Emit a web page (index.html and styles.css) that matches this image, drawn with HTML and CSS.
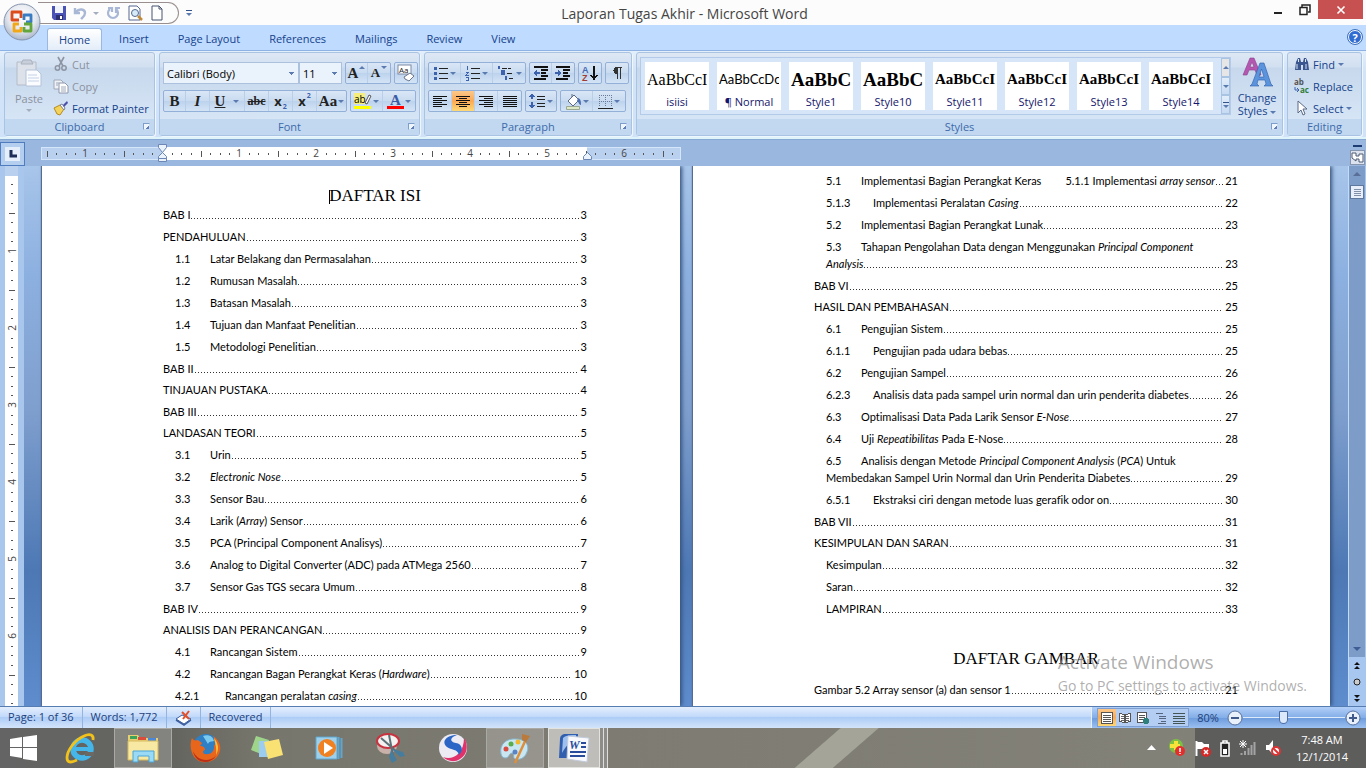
FILE: index.html
```html
<!DOCTYPE html>
<html lang="en">
<head>
    <meta charset="UTF-8">
    <meta name="viewport" content="width=device-width, initial-scale=1.0">
    <title>Laporan Tugas Akhir - Microsoft Word</title>
    <link rel="stylesheet" href="styles.css">
</head>
<body>
    <header class="titlebar">
        <div class="quick">
            <button class="qbtn" aria-label="Save"><svg width="16" height="16" viewBox="0 0 16 16"><path d="M1 1h14v14H3l-2-2z" fill="#4a52b5"/><path d="M4 1h8v7H4z" fill="#eef2fb"/><path d="M5 10h7v5H5z" fill="#2b2f6d"/><path d="M9 11h2v3H9z" fill="#fff"/></svg></button>
            <button class="qbtn wide" aria-label="Undo"><svg width="14" height="14" viewBox="0 0 14 14"><path d="M2 2v5h5M3 6c3-4 9-3 9 1 0 3-2 4-4 6" fill="none" stroke="#a9b7d6" stroke-width="2.4"/></svg><i class="caret dim"></i></button>
            <button class="qbtn" aria-label="Repeat"><svg width="14" height="14" viewBox="0 0 14 14"><path d="M4 3a5 5 0 1 0 6 0M10 7V2h4M2 2h4v4" fill="none" stroke="#a9b7d6" stroke-width="2.2"/></svg></button>
            <button class="qbtn" aria-label="Print Preview"><svg width="16" height="16" viewBox="0 0 16 16"><path d="M2 1h8l3 3v11H2z" fill="#fff" stroke="#54678f"/><circle cx="8" cy="8" r="3.5" fill="#d6ebf7" stroke="#54678f"/><path d="M11 11l4 4" stroke="#c08a3a" stroke-width="2.5"/></svg></button>
            <button class="qbtn" aria-label="New"><svg width="16" height="16" viewBox="0 0 16 16"><path d="M3 1h7l3 3v11H3z" fill="#fff" stroke="#47536e"/><path d="M10 1v3h3" fill="none" stroke="#47536e"/></svg></button>
        </div>
        <button class="quick-more" aria-label="Customize"><i class="caret barred"></i></button>
        <h1>Laporan Tugas Akhir - Microsoft Word</h1>
        <div class="winctl">
            <button aria-label="Minimize"><svg width="12" height="12"><path d="M2 9h8" stroke="#222" stroke-width="2"/></svg></button>
            <button aria-label="Restore"><svg width="12" height="12"><path d="M1 3.500h7v7H1zM3 3V1h8v7H9" fill="none" stroke="#222" stroke-width="1.500"/></svg></button>
            <button class="close" aria-label="Close"><svg width="10" height="10"><path d="M1.500 1.500l7 7M8.500 1.500l-7 7" stroke="#fff" stroke-width="1.600"/></svg></button>
        </div>
    </header>

    <nav class="tabs">
        <a href="#" class="active">Home</a>
        <a href="#">Insert</a>
        <a href="#">Page Layout</a>
        <a href="#">References</a>
        <a href="#">Mailings</a>
        <a href="#">Review</a>
        <a href="#">View</a>
        <button class="help" aria-label="Help">?</button>
        <button class="office" aria-label="Office Button">
            <svg width="38" height="38" viewBox="0 0 38 38">
                <defs><radialGradient id="orb" cx=".5" cy=".35" r=".65"><stop offset="0" stop-color="#fff"/><stop offset=".6" stop-color="#e3e7ee"/><stop offset="1" stop-color="#a9b5c9"/></radialGradient></defs>
                <circle cx="19" cy="19" r="18" fill="url(#orb)" stroke="#8594ad"/>
                <g fill="none" stroke-width="2.800" stroke-linejoin="round">
                    <path d="M16 17h-7V9h9v6" stroke="#dd4b1c"/>
                    <path d="M21 17v-5h7v7h-5" stroke="#3a7cc4"/>
                    <path d="M16 21h-5v7h7v-4" stroke="#f0a818"/>
                    <path d="M21 21h7v7h-7v-4" stroke="#62a53b"/>
                </g>
            </svg>
        </button>
    </nav>

    <section class="ribbon">
        <div class="group clipboard">
            <div class="group-body">
                <button class="big dim-text"><svg width="28" height="30" viewBox="0 0 28 30"><path d="M2 4h19v23H2z" fill="#dde2ea" stroke="#b4bbc8"/><path d="M6 6l2-4h8l2 4z" fill="#c9cfda" stroke="#aab1bf"/><path d="M11 12h11l4 4v12H11z" fill="#fafcff" stroke="#b4c2d8"/><path d="M13 17h9M13 20h11M13 23h11" stroke="#c5d2e6"/></svg><span>Paste</span><i class="caret dim"></i></button>
                <div class="stack">
                    <button class="dim-text"><svg width="16" height="16" viewBox="0 0 16 16"><path d="M5 1l5 9M11 1L6 10" stroke="#8d95a3" stroke-width="1.600"/><circle cx="4.500" cy="12" r="2.200" fill="none" stroke="#8d95a3" stroke-width="1.500"/><circle cx="11" cy="12" r="2.200" fill="none" stroke="#8d95a3" stroke-width="1.500"/></svg>Cut</button>
                    <button class="dim-text"><svg width="16" height="16" viewBox="0 0 16 16"><path d="M1 2h7l2 2v7H1z" fill="#eef1f6" stroke="#a0a8b8"/><path d="M6 5h6l3 3v7H6z" fill="#fff" stroke="#8d97ab"/><path d="M8 9h5M8 11h5M8 13h5M3 5h3M3 7h2" stroke="#a0a8b8"/></svg>Copy</button>
                    <button><svg width="16" height="16" viewBox="0 0 16 16"><path d="M1 8l6-3 4 4-4 6-3-1z" fill="#f3d35b" stroke="#b78a1c"/><path d="M7 5l2-1 3 4-1 2z" fill="#fff" stroke="#77809a"/><path d="M10 5l4-4 1 2-4 4z" fill="#4b4fa8"/></svg>Format Painter</button>
                </div>
            </div>
            <footer>Clipboard<i class="launcher"></i></footer>
        </div>

        <div class="group font">
            <div class="group-body rows">
                <div class="row">
                    <div class="combos">
                        <select class="face" aria-label="Font"><option>Calibri (Body)</option></select>
                        <select class="size" aria-label="Font Size"><option>11</option></select>
                    </div>
                    <div class="btns">
                        <button class="serif w22">A<i class="caret up"></i></button>
                        <button class="serif small w22">A<i class="caret"></i></button>
                    </div>
                    <div class="btns">
                        <button class="w22" aria-label="Clear Formatting"><svg width="18" height="18" viewBox="0 0 18 18"><rect x="1" y="1" width="13" height="9" fill="#fff" stroke="#7d8aa5"/><text x="2" y="9" font-size="8" font-family="Open Sans" fill="#222">Aa</text><path d="M7 13l6-4 4 3-5 5-4-2z" fill="#fff" stroke="#6d7589"/></svg></button>
                    </div>
                </div>
                <div class="row">
                    <div class="btns">
                        <button class="serif w22">B</button>
                        <button class="serif w24 it">I</button>
                        <button class="serif w36"><u>U</u><i class="caret"></i></button>
                        <button class="serif w24 strike">abc</button>
                        <button class="sub w24">x<sub>2</sub></button>
                        <button class="sub w24">x<sup>2</sup></button>
                        <button class="serif w28">Aa<i class="caret"></i></button>
                    </div>
                    <div class="btns">
                        <button class="w32" aria-label="Highlight"><svg width="18" height="18" viewBox="0 0 18 18"><path d="M0 1h11v11H0z" fill="#f5ee7c"/><text x="0" y="11" font-size="10" font-family="Open Sans">ab</text><path d="M11 11l4-8 2 1-4 8z" fill="#fff" stroke="#555"/><path d="M0 14h17v3H0z" fill="#ff0"/></svg><i class="caret"></i></button>
                        <button class="w32" aria-label="Font Color"><svg width="17" height="18" viewBox="0 0 17 18"><text x="3" y="13" font-size="15" font-weight="700" font-family="Liberation Serif" fill="#3a5ba5">A</text><path d="M0 14h17v3H0z" fill="#f00"/></svg><i class="caret"></i></button>
                    </div>
                </div>
            </div>
            <footer>Font<i class="launcher"></i></footer>
        </div>

        <div class="group paragraph">
            <div class="group-body rows">
                <div class="row">
                    <div class="btns">
                        <button class="w32" aria-label="Bullets"><svg width="16" height="16" viewBox="0 0 16 16"><path d="M1 3h3M1 8h3M1 13h3" stroke="#3c62ad" stroke-width="3"/><path d="M6 3h9M6 8h9M6 13h9" stroke="#222"/></svg><i class="caret"></i></button>
                        <button class="w32" aria-label="Numbering"><svg width="16" height="16" viewBox="0 0 16 16"><path d="M2 1v4M1 7h2v1l-2 2h3M1 12h2v3H1" fill="none" stroke="#3c62ad"/><path d="M6 3h9M6 8h9M6 13h9" stroke="#222"/></svg><i class="caret"></i></button>
                        <button class="w32" aria-label="Multilevel List"><svg width="18" height="16" viewBox="0 0 18 16"><path d="M2 1v3M5 6h2v3H5zM9 11v4" fill="none" stroke="#3c62ad" stroke-width="1.500"/><path d="M5 3h9M10 8h6M12 13h4" stroke="#222" stroke-dasharray="5 1"/></svg><i class="caret"></i></button>
                    </div>
                    <div class="btns">
                        <button class="w22" aria-label="Decrease Indent"><svg width="16" height="16" viewBox="0 0 16 16"><path d="M1 2h14M8 5h7M8 8h5M8 11h7M1 14h12" stroke="#111" stroke-width="1.600"/><path d="M0 8l4-3v2h3v2H4v2z" fill="#3c62ad"/></svg></button>
                        <button class="w22" aria-label="Increase Indent"><svg width="16" height="16" viewBox="0 0 16 16"><path d="M1 2h14M8 5h7M8 8h5M8 11h7M1 14h12" stroke="#111" stroke-width="1.600"/><path d="M7 8L3 5v2H0v2h3v2z" fill="#3c62ad"/></svg></button>
                    </div>
                    <div class="btns">
                        <button class="w22" aria-label="Sort"><svg width="16" height="18" viewBox="0 0 16 18"><text x="0" y="9" font-size="9" font-weight="700" font-family="Liberation Sans" fill="#4467b0">A</text><text x="0" y="17" font-size="9" font-weight="700" font-family="Liberation Sans" fill="#a33d33">Z</text><path d="M12 2v12M9 11l3 4 3-4" fill="none" stroke="#111" stroke-width="1.500"/></svg></button>
                    </div>
                    <div class="btns">
                        <button class="w22" aria-label="Show marks"><svg width="12" height="14" viewBox="0 0 12 14"><path d="M6 1a3.500 3.500 0 0 0 0 7z" fill="#333"/><path d="M4 1.500h7M6.500 1v12M9.500 1v12" stroke="#333" stroke-width="1.300"/></svg></button>
                    </div>
                </div>
                <div class="row">
                    <div class="btns">
                        <button class="w23" aria-label="Align Left"><svg width="14" height="12"><path d="M0 1h14M0 5h14M0 9h14" stroke="#111"/><path d="M0 3h9M0 7h9M0 11h9" stroke="#111"/></svg></button>
                        <button class="w23 on" aria-label="Center"><svg width="14" height="12"><path d="M0 1h14M0 5h14M0 9h14" stroke="#111"/><path d="M3 3h8M3 7h8M3 11h8" stroke="#111"/></svg></button>
                        <button class="w23" aria-label="Align Right"><svg width="14" height="12"><path d="M0 1h14M0 5h14M0 9h14" stroke="#111"/><path d="M5 3h9M5 7h9M5 11h9" stroke="#111"/></svg></button>
                        <button class="w23" aria-label="Justify"><svg width="14" height="12"><path d="M0 1h14M0 3h14M0 5h14M0 7h14M0 9h14M0 11h14" stroke="#111"/></svg></button>
                    </div>
                    <div class="btns">
                        <button class="w30" aria-label="Line Spacing"><svg width="17" height="16" viewBox="0 0 17 16"><path d="M3 1v14" stroke="#3c62ad" stroke-dasharray="5 3" stroke-width="1.500"/><path d="M0 4l3-4 3 4zM0 12l3 4 3-4z" fill="#3c62ad"/><path d="M8 3h8M8 6h8M8 10h8M8 13h8" stroke="#222"/></svg><i class="caret"></i></button>
                    </div>
                    <div class="btns">
                        <button class="w32" aria-label="Shading"><svg class="smooth" width="17" height="17" viewBox="0 0 17 17"><path d="M3 8l6-6 5 5-6 6z" fill="#fff" stroke="#5c6a86"/><path d="M7 4V1" stroke="#5c6a86"/><path d="M13 5c3 1 3 4 3 7-2 0-2-3-4-4z" fill="#4a6cb0"/><path d="M1.500 13.500h13v3h-13z" fill="#dce8c6" stroke="#9ba893"/></svg><i class="caret"></i></button>
                        <button class="w32" aria-label="Borders"><svg width="15" height="15"><path d="M1 1h13M1 7h13M1 1v12M7 1v12M13 1v12" stroke="#6b7a99" stroke-dasharray="1 1"/><path d="M0 14h15" stroke="#222"/></svg><i class="caret"></i></button>
                    </div>
                </div>
            </div>
            <footer>Paragraph<i class="launcher"></i></footer>
        </div>

        <div class="group styles">
            <div class="group-body">
                <div class="gallery">
                    <button><b class="s-isi">AaBbCcI</b>isiisi</button>
                    <button><b class="s-normal">AaBbCcDc</b>¶ Normal</button>
                    <button><b class="s-large">AaBbC</b>Style1</button>
                    <button><b class="s-large">AaBbC</b>Style10</button>
                    <button><b>AaBbCcI</b>Style11</button>
                    <button><b>AaBbCcI</b>Style12</button>
                    <button><b>AaBbCcI</b>Style13</button>
                    <button><b>AaBbCcI</b>Style14</button>
                    <div class="gallery-nav">
                        <button class="off" aria-label="Up"><i class="caret up"></i></button>
                        <button aria-label="Down"><i class="caret"></i></button>
                        <button aria-label="More"><i class="caret barred"></i></button>
                    </div>
                </div>
                <button class="big change"><svg width="30" height="30" viewBox="0 0 30 30"><path d="M1 18L8 1h4l7 17h-4l-2-5H7l-2 5zM8 10h4l-2-5z" fill="#b557b0" stroke="#87408a" stroke-width=".6"/><path d="M8 29l2-2 8-21h4l7 21 2 2h-9l2-2-1-4h-7l-1 4 2 2zM17 20h5l-2.500-8z" fill="#5b94dc" stroke="#2d5ca8" stroke-width=".6"/></svg><span>Change<br>Styles <i class="caret"></i></span></button>
            </div>
            <footer>Styles<i class="launcher"></i></footer>
        </div>

        <div class="group editing">
            <div class="group-body">
                <div class="stack">
                    <button><svg width="16" height="14" viewBox="0 0 16 14"><path d="M2 5l2-4h2l1 4h2l1-4h2l2 4 1 8H9V8H7v5H1z" fill="#3b558f"/><path d="M3 7v5M12 7v5M4.500 2v3M11.500 2v3" stroke="#dbe6f8"/></svg>Find <i class="caret"></i></button>
                    <button><svg width="16" height="18" viewBox="0 0 16 18"><text x="0" y="8" font-size="8" font-weight="700" font-family="Open Sans" fill="#555">ab</text><text x="6" y="16" font-size="8" font-weight="700" font-family="Open Sans" fill="#2e7d3a">ac</text><path d="M1 10v3h4M3 11l2 2-2 2" fill="none" stroke="#3c62ad"/></svg>Replace</button>
                    <button><svg width="16" height="16" viewBox="0 0 16 16"><path d="M4 1v12l3-3 2 5 2-1-2-5h4z" fill="#fff" stroke="#5b6987"/></svg>Select <i class="caret"></i></button>
                </div>
            </div>
            <footer>Editing</footer>
        </div>
    </section>

    <div class="ruler-row">
        <button class="tabstop" aria-label="Tab selector"><svg width="8" height="8"><path d="M2 0v6h6" fill="none" stroke="#1d2f58" stroke-width="3"/></svg></button>
        <div class="hruler">
            <svg width="640" height="22">
                <defs><pattern id="inch" x="121" y="7" width="77" height="13" patternUnits="userSpaceOnUse">
                    <path d="M10 6v2M19 6v2M29 6v2M48 6v2M58 6v2M67 6v2M39 4v6" stroke="#555"/>
                </pattern></defs>
                <rect x="0.500" y="7.500" width="639" height="12" fill="#b9d0ee" stroke="#d6e6fa"/>
                <rect x="121" y="7" width="425" height="13" fill="#fff"/>
                <rect x="4" y="7" width="630" height="13" fill="url(#inch)"/>
                <g font-size="10" font-family="Open Sans" fill="#444" text-anchor="middle">
                    <text x="44" y="17">1</text><text x="198" y="17">1</text><text x="275" y="17">2</text><text x="352" y="17">3</text><text x="429" y="17">4</text><text x="506" y="17">5</text><text x="583" y="17">6</text>
                </g>
                <g fill="#eaf2fc" stroke="#6c87b5"><path d="M117.500 4.500h8v3l-4 5-4-5zM121.500 12.500l4 4v2h-8v-2zM117.500 18.500h8v3h-8z"/><path d="M546.500 12.500l4 4v3h-8v-3z"/></g>
            </svg>
        </div>
        <button class="view-ruler" aria-label="View Ruler"><svg width="15" height="20" viewBox="0 0 15 20"><path d="M3 1h9" stroke="#1e3c72" stroke-width="2"/><rect x=".5" y="5.500" width="14" height="14" fill="#dde3ee" stroke="#8694ad"/><path d="M2 8h4v3h3V9h4v8H9v-3H6v2L2 13z" fill="#fff" stroke="#4d5a75"/></svg></button>
    </div>

    <main class="workspace">
        <div class="vruler">
            <svg width="24" height="540">
                <defs><pattern id="vinch" x="5" y="8" width="13" height="77" patternUnits="userSpaceOnUse">
                    <path d="M6 10h2M6 19h2M6 29h2M6 48h2M6 58h2M6 67h2M4 39h6" stroke="#555"/>
                </pattern></defs>
                <rect x="5" y="0" width="13" height="10" fill="#b9d0ee"/>
                <rect x="5" y="10" width="13" height="530" fill="#fff"/>
                <rect x="5" y="12" width="13" height="528" fill="url(#vinch)"/>
                <g font-size="10" font-family="Open Sans" fill="#444" text-anchor="middle">
                    <text transform="translate(16 85) rotate(-90)">1</text><text transform="translate(16 162) rotate(-90)">2</text><text transform="translate(16 239) rotate(-90)">3</text><text transform="translate(16 316) rotate(-90)">4</text><text transform="translate(16 393) rotate(-90)">5</text><text transform="translate(16 470) rotate(-90)">6</text>
                </g>
            </svg>
        </div>

        <div class="canvas">
            <article class="page left">
                <h2>DAFTAR ISI</h2>
                <ol class="toc">
                    <li class="bab"><span>BAB I</span><i></i><b>3</b></li>
                    <li><span>PENDAHULUAN</span><i></i><b>3</b></li>
                    <li class="sub1"><em>1.1</em><span>Latar Belakang dan Permasalahan</span><i></i><b>3</b></li>
                    <li class="sub1"><em>1.2</em><span>Rumusan Masalah</span><i></i><b>3</b></li>
                    <li class="sub1"><em>1.3</em><span>Batasan Masalah</span><i></i><b>3</b></li>
                    <li class="sub1"><em>1.4</em><span>Tujuan dan Manfaat Penelitian</span><i></i><b>3</b></li>
                    <li class="sub1"><em>1.5</em><span>Metodologi Penelitian</span><i></i><b>3</b></li>
                    <li class="bab"><span>BAB II</span><i></i><b>4</b></li>
                    <li><span>TINJAUAN PUSTAKA</span><i></i><b>4</b></li>
                    <li class="bab"><span>BAB III</span><i></i><b>5</b></li>
                    <li><span>LANDASAN TEORI</span><i></i><b>5</b></li>
                    <li class="sub1"><em>3.1</em><span>Urin</span><i></i><b>5</b></li>
                    <li class="sub1"><em>3.2</em><span><q>Electronic Nose</q></span><i></i><b>5</b></li>
                    <li class="sub1"><em>3.3</em><span>Sensor Bau</span><i></i><b>6</b></li>
                    <li class="sub1"><em>3.4</em><span>Larik (<q>Array</q>) Sensor</span><i></i><b>6</b></li>
                    <li class="sub1"><em>3.5</em><span>PCA (Principal Component Analisys)</span><i></i><b>7</b></li>
                    <li class="sub1"><em>3.6</em><span>Analog to Digital Converter (ADC) pada ATMega 2560</span><i></i><b>7</b></li>
                    <li class="sub1"><em>3.7</em><span>Sensor Gas TGS secara Umum</span><i></i><b>8</b></li>
                    <li class="bab"><span>BAB IV</span><i></i><b>9</b></li>
                    <li><span>ANALISIS DAN PERANCANGAN</span><i></i><b>9</b></li>
                    <li class="sub1"><em>4.1</em><span>Rancangan Sistem</span><i></i><b>9</b></li>
                    <li class="sub1"><em>4.2</em><span>Rancangan Bagan Perangkat Keras (<q>Hardware</q>)</span><i></i><b>10</b></li>
                    <li class="sub2 wide"><em>4.2.1</em><span>Rancangan peralatan <q>casing</q></span><i></i><b>10</b></li>
                </ol>
            </article>

            <article class="page right">
                <ol class="toc">
                    <li class="sub1"><em>5.1</em><span>Implementasi Bagian Perangkat Keras</span><span class="tabbed">5.1.1 Implementasi <q>array sensor</q></span><i></i><b>21</b></li>
                    <li class="sub2"><em>5.1.3</em><span>Implementasi Peralatan <q>Casing</q></span><i></i><b>22</b></li>
                    <li class="sub1"><em>5.2</em><span>Implementasi Bagian Perangkat Lunak</span><i></i><b>23</b></li>
                    <li class="sub1 wrap"><em>5.3</em><span>Tahapan Pengolahan Data dengan Menggunakan <q>Principal Component</q></span></li>
                    <li class="sub1"><span><q>Analysis</q></span><i></i><b>23</b></li>
                    <li class="bab"><span>BAB VI</span><i></i><b>25</b></li>
                    <li><span>HASIL DAN PEMBAHASAN</span><i></i><b>25</b></li>
                    <li class="sub1"><em>6.1</em><span>Pengujian Sistem</span><i></i><b>25</b></li>
                    <li class="sub2"><em>6.1.1</em><span>Pengujian pada udara bebas</span><i></i><b>25</b></li>
                    <li class="sub1"><em>6.2</em><span>Pengujian Sampel</span><i></i><b>26</b></li>
                    <li class="sub2"><em>6.2.3</em><span>Analisis data pada sampel urin normal dan urin penderita diabetes</span><i></i><b>26</b></li>
                    <li class="sub1"><em>6.3</em><span>Optimalisasi Data Pada Larik Sensor <q>E-Nose</q></span><i></i><b>27</b></li>
                    <li class="sub1"><em>6.4</em><span>Uji <q>Repeatibilitas</q> Pada E-Nose</span><i></i><b>28</b></li>
                    <li class="sub1 wrap"><em>6.5</em><span>Analisis dengan Metode <q>Principal Component Analysis</q> (<q>PCA</q>) Untuk</span></li>
                    <li class="sub1"><span>Membedakan Sampel Urin Normal dan Urin Penderita Diabetes</span><i></i><b>29</b></li>
                    <li class="sub2"><em>6.5.1</em><span>Ekstraksi ciri dengan metode luas gerafik odor on</span><i></i><b>30</b></li>
                    <li class="bab"><span>BAB VII</span><i></i><b>31</b></li>
                    <li><span>KESIMPULAN DAN SARAN</span><i></i><b>31</b></li>
                    <li class="sub1"><span>Kesimpulan</span><i></i><b>32</b></li>
                    <li class="sub1"><span>Saran</span><i></i><b>32</b></li>
                    <li class="sub1"><span>LAMPIRAN</span><i></i><b>33</b></li>
                </ol>
                <h2>DAFTAR GAMBAR</h2>
                <ol class="toc">
                    <li><span>Gambar 5.2 Array sensor (a) dan sensor 1</span><i></i><b>21</b></li>
                </ol>
            </article>

            <div class="watermark"><strong>Activate Windows</strong>Go to PC settings to activate Windows.</div>
        </div>

        <div class="scrollbar">
            <div class="track">
                <button aria-label="Scroll up"><i class="caret up"></i></button>
                <button class="thumb" aria-label="Scroll thumb"></button>
                <button class="down" aria-label="Scroll down"><i class="caret"></i></button>
            </div>
            <button aria-label="Previous page"><svg width="6" height="8"><path d="M0 3l3-3 3 3zM0 7l3-3 3 3z" fill="#111"/></svg></button>
            <button aria-label="Browse object"><svg width="8" height="8"><circle cx="4" cy="4" r="3" fill="#ccc" stroke="#222"/></svg></button>
            <button aria-label="Next page"><svg width="6" height="8"><path d="M0 1l3 3 3-3zM0 5l3 3 3-3z" fill="#111"/></svg></button>
        </div>
    </main>

    <div class="statusbar">
        <span>Page: 1 of 36</span>
        <span>Words: 1,772</span>
        <span class="proof"><svg width="17" height="16" viewBox="0 0 17 16"><path d="M1 9l6-4 9 4-7 5z" fill="#fff" stroke="#3d5f9f"/><path d="M1 10l8 5 7-5" fill="none" stroke="#3d5f9f" stroke-width="1.500"/><path d="M7 2l7 7M14 1L8 9" stroke="#e2502b" stroke-width="2"/></svg></span>
        <span>Recovered</span>
        <div class="status-right">
            <div class="views">
                <button class="on" aria-label="Print Layout"><svg width="12" height="12"><path d="M.5.500h11v11H.5z" fill="#fff" stroke="#555"/><path d="M2 3h8M2 5h8M2 7h8M2 9h8" stroke="#555"/></svg></button>
                <button aria-label="Full Screen Reading"><svg width="12" height="12"><path d="M.5 1.500l5 1v8l-5-1zM11.500 1.500l-5 1v8l5-1z" fill="#fff" stroke="#555"/><path d="M2 4h3M2 6h3M2 8h3M7 4h3M7 6h3M7 8h3" stroke="#666"/></svg></button>
                <button aria-label="Web Layout"><svg width="12" height="12"><path d="M.5.500h9v10h-9z" fill="#fff" stroke="#555"/><path d="M2 3h6M2 5h6M2 7h6" stroke="#555"/><circle cx="9" cy="9" r="3" fill="#2f7f7a"/></svg></button>
                <button aria-label="Outline"><svg width="12" height="12"><path d="M1 1h7M4 4h7M4 6h7M6 9h5M3 11h8" stroke="#56657f"/></svg></button>
                <button aria-label="Draft"><svg width="12" height="12"><path d="M0 1h12M0 4h12M0 6h12M0 9h12M0 11h12" stroke="#455"/></svg></button>
            </div>
            <span class="pct">80%</span>
            <button class="zoom" aria-label="Zoom out"><svg width="16" height="16"><circle cx="8" cy="8" r="7" fill="#e8f0fb" stroke="#56709f"/><path d="M4 8h8" stroke="#3f5a8b" stroke-width="2"/></svg></button>
            <input type="range" min="0" max="100" value="39" aria-label="Zoom">
            <button class="zoom" aria-label="Zoom in"><svg width="16" height="16"><circle cx="8" cy="8" r="7" fill="#e8f0fb" stroke="#56709f"/><path d="M4 8h8M8 4v8" stroke="#3f5a8b" stroke-width="2"/></svg></button>
        </div>
    </div>

    <footer class="taskbar">
        <button class="start" aria-label="Start"><svg width="28" height="26" viewBox="0 0 28 26"><path d="M0 4l12-2v10H0zM13 2l14-2v12H13zM0 13h12v10L0 21zM13 13h14v13l-14-2z" fill="#fff"/></svg></button>
        <button aria-label="Internet Explorer"><svg width="32" height="32" viewBox="0 0 32 32"><circle cx="17" cy="17" r="9" fill="none" stroke="#45b6ea" stroke-width="5.500"/><path d="M10 17h15" stroke="#45b6ea" stroke-width="4"/><path d="M20 20h9v4h-9z" fill="#6b6965"/><path d="M28 8c1-5-3-7-9-4C10 8 2 18 2 26c0 6 6 4 10 2" fill="none" stroke="#f2c21c" stroke-width="2.800"/></svg></button>
        <button class="open" aria-label="File Explorer"><svg width="34" height="32" viewBox="0 0 34 32"><path d="M2 3h10l2 3h18v22H2z" fill="#e9cf72"/><path d="M4 4h7v3H4z" fill="#3ca35a"/><path d="M12 5h8v3h-8z" fill="#d94d3a"/><path d="M22 6h8v3h-8z" fill="#4a87d8"/><path d="M2 9h30v19H2z" fill="#f7e8a4" stroke="#d6b95d"/><path d="M7 30V19h21v11h-5v-6H12v6z" fill="#9bdaf5" stroke="#4aa5d6"/></svg></button>
        <button aria-label="Firefox"><svg width="32" height="32" viewBox="0 0 32 32"><circle cx="17" cy="15" r="13" fill="#2e7fc4"/><path d="M14 4c5-2 10 0 11 5-3 1-5 0-6 3" fill="#7cc9f0"/><path d="M3 6c1 2 3 3 6 2l4 3-2 3c3 0 5 1 5 4-2 0-3 3 0 4 5 1 10-2 9-9 2 2 1-6-1-9 8 5 10 15 3 22-8 7-19 5-23-3C1 17 1 11 3 6z" fill="#e8661c"/><path d="M4 19c3 8 14 13 23 5-7 10-21 7-23-5z" fill="#b92f17"/><path d="M25 6c5 6 5 12 2 17 1-7-1-12-2-17z" fill="#f8be3a"/></svg></button>
        <button aria-label="Sticky Notes"><svg width="34" height="28" viewBox="0 0 34 28"><path d="M6 2l13 4-5 15L1 16z" fill="#9fd58b"/><path d="M9 7h15v16H9z" fill="#9ccdf0"/><path d="M14 8l15-3 4 16-15 4z" fill="#f9e174"/></svg></button>
        <button aria-label="Media Player"><svg width="28" height="26" viewBox="0 0 28 26"><path d="M1 2h21v22H1z" fill="#9ed0ec" stroke="#5fa7d0"/><path d="M23.500 2v22M26.500 3v20" stroke="#5fa7d0" stroke-width="2"/><circle cx="12" cy="13" r="9" fill="#f08020"/><path d="M9 7l9 6-9 6z" fill="#fff"/></svg></button>
        <button aria-label="Snipping Tool"><svg width="32" height="32" viewBox="0 0 32 32"><ellipse cx="12" cy="14" rx="10" ry="8" fill="#c9b0a8"/><ellipse cx="13" cy="9" rx="11" ry="7" fill="#f4f1f1" stroke="#c8333f" stroke-width="2"/><path d="M6 6l16 14M14 3l4 20" stroke="#5c7075" stroke-width="2"/><path d="M17 17l11 3 2 4-5 1zM16 18l6 10-5 3-3-6z" fill="#467c9d"/></svg></button>
        <button aria-label="Baidu Browser"><svg width="32" height="32" viewBox="0 0 32 32"><circle cx="16" cy="16" r="14" fill="#eceaf2"/><path d="M27 6c5 8 3 17-4 21-6 4-13 2-17-2 9 4 21-3 21-19z" fill="#e0336c"/><path d="M20 3C9 3 4 10 10 15c4 3 11 2 12 8 5-5 3-11-3-12-7-1-6-6 1-8z" fill="#2b66c6"/></svg></button>
        <button class="open" aria-label="Paint"><svg width="32" height="32" viewBox="0 0 32 32"><path d="M2 22C0 12 8 6 17 7c9 0 14 6 11 13-3 9-12 8-13 6s1-5-2-5-3 5-6 5-4-1-5-4z" fill="#c9e6f3" stroke="#86b6ce"/><circle cx="7" cy="17" r="2.500" fill="#d84b3f"/><circle cx="12" cy="12" r="2.500" fill="#59ad4a"/><circle cx="19" cy="10" r="2.500" fill="#f2b830"/><circle cx="16" cy="20" r="2.500" fill="#5b84c4"/><path d="M28 5L16 31" stroke="#dd8f3a" stroke-width="2.500"/><path d="M23 2l8 2-4 6-4-2z" fill="#b97a3c"/></svg></button>
        <button class="open word" aria-label="Microsoft Word"><svg width="32" height="30" viewBox="0 0 32 30"><path d="M2 6c0-3 2-5 6-5h12v24H1z" fill="#315fae"/><path d="M5 5c3-3 8-3 13-3v6c-6 0-10 5-14 12z" fill="#9dc0ef"/><path d="M10 3l21 2-2 24-20-3z" fill="#f7f9fd" stroke="#c2cbdc"/><text x="11" y="16" font-size="12" font-style="italic" font-weight="700" font-family="Liberation Serif" fill="#284c9b">W</text><path d="M23 10h5M23 14h5M12 19h16M12 23h15" stroke="#284c9b" stroke-width="2"/></svg></button>
        <div class="tray">
            <svg width="9" height="6"><path d="M0 5l4.500-5L9 5z" fill="#fff"/></svg>
            <svg class="shield" width="18" height="18" viewBox="0 0 18 18"><circle cx="8" cy="7" r="7" fill="#7cc142"/><path d="M2 7h10M8 2v9" stroke="#f6e43b" stroke-width="4"/><circle cx="12" cy="12" r="5" fill="#e32f2b"/><path d="M12 9v4M12 14v1" stroke="#fff" stroke-width="1.500"/></svg>
            <svg width="16" height="17" viewBox="0 0 16 17"><path d="M1.500 1v15" stroke="#fff" stroke-width="2"/><path d="M2 2h5l2 2h5v7H9L7 9H2z" fill="#fff"/><circle cx="11" cy="12" r="5" fill="#d72828"/><path d="M9 10l4 4M13 10l-4 4" stroke="#fff" stroke-width="1.500"/></svg>
            <svg width="10" height="17" viewBox="0 0 10 17"><path d="M1 3h8v13H1zM3 1h4v2H3z" fill="#222" stroke="#fff" stroke-width="1.500"/><path d="M3 9h4v5H3z" fill="#fff"/></svg>
            <svg width="17" height="16" viewBox="0 0 17 16"><path d="M2.500 13v2M6 11v4M9.500 8v7M12.500 5v10M15.500 2v13" stroke="#a3a3a3" stroke-width="2"/><path d="M4 0v8M0 4h8M1 1l6 6M7 1L1 7" stroke="#fff"/></svg>
            <svg width="16" height="16" viewBox="0 0 16 16"><path d="M1 5h3l4-5v14l-4-4H1z" fill="#fff"/><circle cx="11" cy="11" r="4" fill="#fff" stroke="#dc3434" stroke-width="2"/><path d="M8 8l6 6" stroke="#dc3434" stroke-width="2"/></svg>
            <time>7:48 AM<br>12/1/2014</time>
        </div>
    </footer>
</body>
</html>
```
FILE: styles.css
```css
* {
    box-sizing: border-box;
}

body {
    margin: 0;
    height: 100vh;
    display: flex;
    flex-direction: column;
    overflow: hidden;
    font-family: "Open Sans", sans-serif;
    font-size: 11px;
    color: #15428b;
    background: #9ab7df;
}

button {
    border: 0;
    padding: 0;
    margin: 0;
    background: none;
    font: inherit;
    color: inherit;
    display: flex;
    align-items: center;
    justify-content: center;
    white-space: nowrap;
}

svg {
    display: block;
    flex: none;
    overflow: visible;
}

.caret {
    display: inline-block;
    flex: none;
    border: 3px solid transparent;
    border-top-color: #5b7bb0;
    border-bottom: 0;
    vertical-align: middle;
}

.caret.up {
    border-top: 0;
    border-bottom: 3px solid #5b7bb0;
}

.caret.dim {
    border-top-color: #a4adbd;
}

.caret.barred {
    position: relative;
    top: 2px;
}

.caret.barred::before {
    content: "";
    position: absolute;
    left: -3px;
    top: -6px;
    width: 6px;
    height: 1px;
    background: #33528c;
}

/* title bar */
.titlebar {
    flex: none;
    height: 25px;
    display: flex;
    position: relative;
    background: #fcfcfc;
}

.quick {
    height: 22px;
    margin: 2px 0 0 38px;
    padding: 0 12px;
    display: flex;
    align-items: center;
    gap: 4px;
    border: 1px solid #9a8f8f;
    border-left: 0;
    border-radius: 0 11px 11px 0;
}

.qbtn {
    width: 18px;
    height: 18px;
}

.qbtn.wide {
    width: 28px;
    gap: 6px;
}

.quick-more {
    width: 20px;
}

.titlebar h1 {
    position: absolute;
    left: 0;
    right: 0;
    top: 0;
    margin: 0;
    padding-left: 3px;
    text-align: center;
    font-size: 14px;
    line-height: 27px;
    font-weight: 400;
    color: #444;
    pointer-events: none;
}

.winctl {
    margin-left: auto;
    margin-right: 3px;
    height: 19px;
    display: flex;
}

.winctl button {
    width: 27px;
}

.winctl .close {
    width: 45px;
    background: #c75050;
}

/* tabs */
.tabs {
    flex: none;
    height: 25px;
    display: flex;
    align-items: flex-end;
    gap: 5px;
    padding: 0 4px 0 47px;
    position: relative;
    background: #bfdbff;
}

.tabs a {
    height: 22px;
    padding: 0 12px;
    line-height: 22px;
    color: #15428b;
    text-decoration: none;
}

.tabs .active {
    background: linear-gradient(#fff, #e3edf9);
    border: 1px solid #9ab8e0;
    border-bottom: 0;
    border-radius: 3px 3px 0 0;
    padding: 0 11px;
    line-height: 21px;
}

.help {
    width: 14px;
    height: 14px;
    margin: 0 0 6px auto;
    border-radius: 50%;
    border: 1px solid #fff;
    outline: 1px solid #3d6fc0;
    background: #2f6bd0;
    color: #fff;
    font-weight: 700;
}

.office {
    position: absolute;
    left: 3px;
    top: -22px;
}

/* ribbon */
.ribbon {
    flex: none;
    height: 90px;
    display: flex;
    gap: 4px;
    padding: 1px 4px 3px;
    background: linear-gradient(#e3effb, #d3e4f8 20px, #cfe2f8);
    border-top: 1px solid #8db2e3;
    border-bottom: 1px solid #86a8d3;
    box-shadow: inset 0 -2px 0 #dff3fb;
}

.group {
    flex: none;
    display: flex;
    flex-direction: column;
    border: 1px solid #a9c3e2;
    border-radius: 3px;
    background: linear-gradient(#dee8f5, #d1dff0 14px, #c7d8ed 15px, #dbe9f8);
    box-shadow: 1px 1px 0 #eef6fe;
}

.group footer {
    height: 16px;
    line-height: 16px;
    text-align: center;
    position: relative;
    background: #c1d8f0;
    color: #3e6aaa;
}

.launcher {
    position: absolute;
    right: 4px;
    top: 4px;
    width: 7px;
    height: 7px;
    border: 1px solid #7f9dcb;
    border-right-color: #c8dbf2;
    border-bottom-color: #c8dbf2;
    background: linear-gradient(135deg, #eef5fd 60%, #5c7db5 60%);
}

.group-body {
    flex: 1;
    display: flex;
}

.group-body.rows {
    flex-direction: column;
    gap: 6px;
    padding: 9px 3px 0;
}

.clipboard { width: 151px; }
.font { width: 261px; }
.paragraph { width: 208px; }

.styles {
    flex: 1;
    min-width: 0;
}

.editing { width: 75px; }

.dim-text {
    color: #8b929e;
}

.big {
    flex-direction: column;
    justify-content: flex-start;
    line-height: 13px;
}

.clipboard .big {
    width: 48px;
    padding-top: 5px;
    gap: 4px;
}

.stack {
    display: flex;
    flex-direction: column;
    align-items: flex-start;
}

.stack button {
    height: 22px;
    gap: 3px;
}

.editing .stack {
    padding-left: 6px;
}

.row {
    display: flex;
    gap: 3px;
}

.combos {
    display: flex;
}

select {
    appearance: none;
    height: 22px;
    padding: 0 3px;
    font: inherit;
    color: #000;
    border: 1px solid #abc1de;
    border-radius: 0;
    background-color: #eaf2fb;
    background-image: linear-gradient(#5b7bb0, #5b7bb0), linear-gradient(#5b7bb0, #5b7bb0), linear-gradient(#5b7bb0, #5b7bb0);
    background-size: 5px 1px, 3px 1px, 1px 1px;
    background-position: right 4px top 9px, right 5px top 10px, right 6px top 11px;
    background-repeat: no-repeat;
}

.face { width: 136px; }
.size { width: 43px; }

.btns {
    display: flex;
    height: 22px;
    border: 1px solid #93b0d8;
    border-radius: 2px;
    background: linear-gradient(#d9e6f6, #c9dbf0 50%, #bcd2ec 50%, #d4e4f6);
}

.btns button {
    color: #222;
    border-right: 1px solid #b9cee8;
    gap: 1px;
}

.btns button:last-child {
    border-right: 0;
}

.w22 { width: 22px; }
.w23 { width: 23px; }
.w24 { width: 24px; }
.w28 { width: 29px; }
.w30 { width: 30px; }
.w32 { width: 32px; }
.w36 { width: 35px; }

.btns .serif {
    font-family: "Liberation Serif", serif;
    font-weight: 700;
    font-size: 15px;
}

.btns .w36 {
    gap: 8px;
}

.serif .caret {
    align-self: flex-start;
    margin-top: 3px;
}

.w36 .caret,
.w28 .caret {
    margin-top: 9px;
}

.btns .small { font-size: 13px; }
.btns .it { font-style: italic; }

.btns .strike {
    font-size: 12px;
    text-decoration: line-through;
}

.btns .sub {
    font-weight: 700;
    font-size: 13px;
}

.sub sub,
.sub sup {
    font-size: 7px;
    color: #3c62ad;
}

.sub sub { align-self: flex-end; }
.sub sup { align-self: flex-start; }

.paragraph svg,
.views svg,
.vruler path,
.hruler pattern path {
    shape-rendering: crispEdges;
}

.paragraph .smooth {
    shape-rendering: auto;
}

.on {
    background: linear-gradient(#fbc88a, #fba954 50%, #fdd978);
}

.gallery {
    flex: 1;
    min-width: 0;
    margin: 4px 3px;
    padding-left: 4px;
    display: flex;
    align-items: center;
    gap: 8px;
    border: 1px solid #b3cbe8;
    background: #d6e6f8;
}

.gallery > button {
    flex: none;
    width: 64px;
    height: 48px;
    padding-top: 2px;
    flex-direction: column;
    background: #fff;
    color: #15156b;
    line-height: 16px;
}

.gallery b {
    width: 60px;
    height: 29px;
    line-height: 29px;
    overflow: hidden;
    text-align: left;
    font-family: "Liberation Serif", serif;
    font-size: 15px;
    color: #000;
}

.gallery .s-isi {
    font-size: 16px;
    font-weight: 400;
}

.gallery .s-normal {
    font-family: Lato, sans-serif;
    font-size: 13px;
    font-weight: 400;
}

.gallery .s-large { font-size: 19px; }

.gallery-nav {
    align-self: stretch;
    width: 14px;
    margin-left: auto;
    display: flex;
    flex-direction: column;
}

.gallery-nav button {
    flex: 1;
    border: 1px solid #a9c3e2;
    background: linear-gradient(#e2edfa, #c6daf2);
}

.gallery-nav .off {
    background: #e6e6e6;
}

.change {
    flex: none;
    width: 46px;
    margin-right: 2px;
    padding-top: 4px;
    gap: 4px;
}

/* rulers */
.ruler-row {
    flex: none;
    height: 26px;
    display: flex;
    background: #9ab7df;
}

.tabstop {
    width: 25px;
    height: 24px;
    margin-top: 2px;
    border: 1px solid #4f7bbf;
    outline: 4px solid #b4cef0;
    outline-offset: -5px;
    background: #e4effb;
}

.hruler {
    flex: 1;
    padding-left: 16px;
}

.view-ruler {
    width: 17px;
    align-items: flex-end;
    padding-bottom: 1px;
}

.workspace {
    flex: 1;
    min-height: 0;
    display: flex;
}

.vruler {
    width: 24px;
    overflow: hidden;
    background: #a9c6ec;
}

.canvas {
    flex: 1;
    position: relative;
    display: flex;
    gap: 13px;
    padding: 0 18px;
    overflow: hidden;
    background: linear-gradient(#a8c5ea, #8cb0e0 20%, #7f9fce 45%, #4d78b4 75%, #5e8ccd);
}

/* pages */
.page {
    flex: 1;
    background: #fff;
    box-shadow: 2px 0 4px #35527d, -1px 0 1px #5a6f92;
    color: #000;
    font-family: Lato, sans-serif;
    font-variant-ligatures: none;
}

.page h2 {
    margin: 0;
    text-align: center;
    font-family: "Liberation Serif", serif;
    font-size: 17px;
    line-height: 20px;
    font-weight: 400;
}

.left {
    padding: 20px 93px 0 121px;
}

.left h2::before {
    content: "";
    display: inline-block;
    width: 1px;
    height: 14px;
    margin-right: -1px;
    vertical-align: -3px;
    background: #000;
}

.right {
    padding: 6px 92px 0 121px;
}

.right h2 {
    margin: 32px 0 12px;
}

.toc {
    list-style: none;
    margin: 0;
    padding: 0;
    font-size: 11px;
    line-height: 17px;
}

.toc li {
    display: flex;
    margin-bottom: 5px;
    white-space: nowrap;
}

.toc .bab { margin-bottom: 4px; }
.toc .wrap { margin-bottom: 0; }

.left .bab:first-child { margin-bottom: 5px; }

.toc .sub1,
.toc .sub2 {
    padding-left: 12px;
}

.toc em {
    width: 35px;
    font-style: normal;
}

.toc .sub2 em { width: 47px; }
.toc .wide em { width: 50px; }

.toc q {
    quotes: none;
    font-style: italic;
}

.toc b {
    font-weight: 400;
}

/* dot leader up to the page number */
.toc i {
    flex: 1;
    height: 1px;
    margin: 12px 2px 0 1px;
    background: repeating-linear-gradient(90deg, #333 0 1px, transparent 1px 3px);
}

.tabbed {
    margin-left: 24px;
}

.watermark {
    position: absolute;
    right: 41px;
    bottom: 9px;
    font-size: 14px;
    line-height: 23px;
    color: rgba(140, 140, 140, 0.7);
}

.watermark strong {
    display: block;
    font-size: 19px;
    font-weight: 400;
}

/* scroll bar */
.scrollbar {
    width: 18px;
    display: flex;
    flex-direction: column;
    background: #a7c6f0;
    border-left: 1px solid #c4dbf7;
    padding-right: 1px;
}

.scrollbar > button {
    height: 16px;
}

.track {
    flex: 1;
    display: flex;
    flex-direction: column;
    margin-bottom: 1px;
    background: #7d9cc8;
}

.track button {
    height: 16px;
}

.track .caret {
    border-width: 4px;
    border-top-color: #3f5c95;
    border-bottom-width: 0;
}

.track .caret.up {
    border-top-width: 0;
    border-bottom: 4px solid #5a6f98;
}

.track .thumb {
    height: 14px;
    margin: 3px 1px 0;
    border: 1px solid #5f769d;
    background: repeating-linear-gradient(#8190a8 0 1px, transparent 1px 2px) center / 7px 7px no-repeat, #e8effa;
}

.track .down {
    margin-top: auto;
}

/* status bar */
.statusbar {
    flex: none;
    height: 22px;
    display: flex;
    border-top: 1px solid #567db1;
    background: linear-gradient(#e3eefd, #c3dafa 45%, #adccf6 50%, #d3e4fb);
}

.statusbar > span {
    padding: 0 8px;
    line-height: 20px;
    border-right: 1px solid #94b4e0;
    color: #1c3f7c;
}

.statusbar .proof {
    display: flex;
    align-items: center;
}

.status-right {
    margin-left: auto;
    width: 275px;
    padding: 0 5px;
    display: flex;
    align-items: center;
    background: linear-gradient(#b2cff8, #83aee8 50%, #6f9ddd 55%, #9cc1f1);
    border-left: 1px solid #e6f0fd;
}

.views {
    display: flex;
    border: 1px solid #7f9fd0;
    background: #b3cef2;
}

.views button {
    width: 18px;
    height: 17px;
}

.pct {
    flex: 1;
    text-align: center;
    color: #1c3f7c;
}

input[type="range"] {
    appearance: none;
    width: 102px;
    height: 16px;
    margin: 0;
    background: linear-gradient(#dceafc, #dceafc) center / 100% 1px no-repeat;
}

input[type="range"]::-webkit-slider-thumb {
    appearance: none;
    width: 9px;
    height: 13px;
    border: 1px solid #4b6da6;
    border-radius: 1px 1px 5px 5px;
    background: #dbe8fa;
}

/* taskbar */
.taskbar {
    flex: none;
    height: 40px;
    display: flex;
    gap: 4px;
    background: linear-gradient(90deg, transparent calc(100% - 171px), #5d5d5c 0), linear-gradient(139deg, transparent 551px, #a5a498 552px 576px, transparent 577px), linear-gradient(90deg, #646464, #64645f 170px, #77766c 260px, #7d7b72 600px, #84837a);
}

.taskbar button {
    width: 58px;
}

.taskbar .start {
    width: 48px;
}

.taskbar .open {
    border: 1px solid #aaa9a4;
    background: rgba(255, 255, 255, 0.2);
}

.taskbar .word {
    width: 52px;
    border-color: #e2e2de;
    background: rgba(255, 255, 255, 0.5);
    box-shadow: 3px 0 0 #8d8c86, 4px 0 0 #ddd, 7px 0 0 #8d8c86, 8px 0 0 #ddd;
}

.tray {
    margin-left: auto;
    padding-right: 18px;
    display: flex;
    align-items: center;
    gap: 9px;
}

.tray .shield {
    margin-left: 3px;
}

.tray time {
    margin-left: 6px;
    text-align: center;
    line-height: 17px;
    color: #fff;
}
```
